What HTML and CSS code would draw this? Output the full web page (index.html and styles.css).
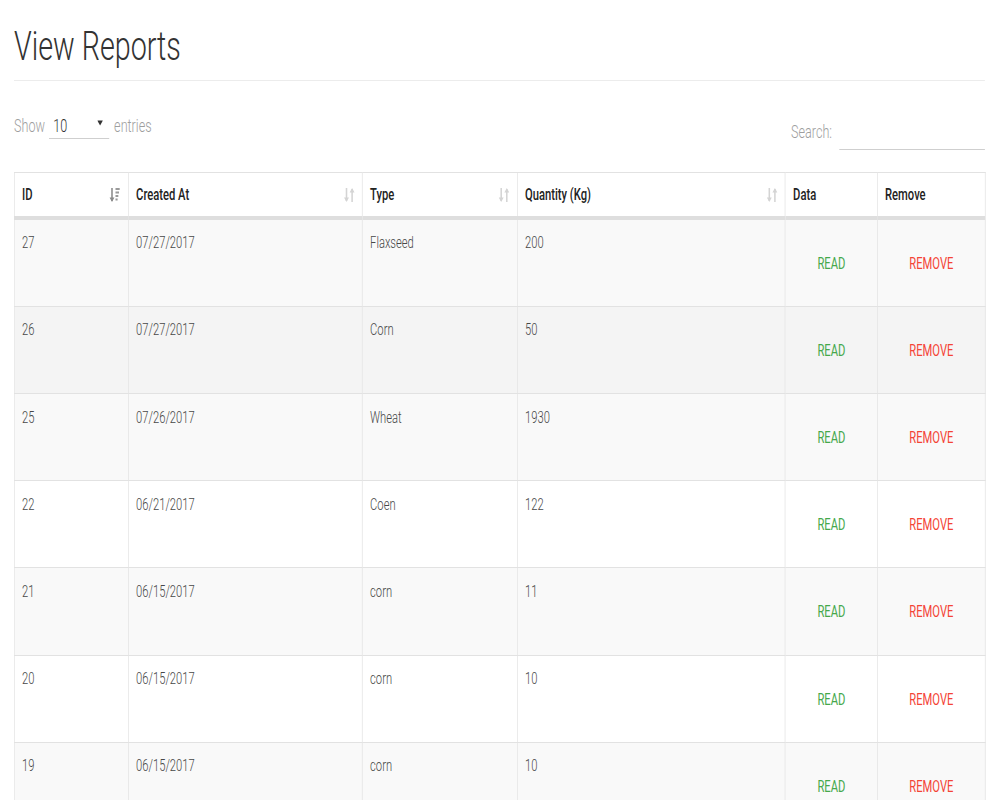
FILE: index.html
```html
<!DOCTYPE html>
<html lang="en">
<head>
<meta charset="utf-8">
<title>View Reports</title>
<link rel="stylesheet" href="styles.css">
</head>
<body>
<div class="page">
  <div class="page-head">
    <h1 class="title">View Reports</h1>
  </div>

  <div class="toolbar">
    <div class="length">
      <span class="muted">Show</span>
      <span class="select">10 <svg class="caret" viewBox="0 0 10 6" width="10" height="6"><path d="M0 0 L10 0 L5 6 Z" fill="#333"/></svg></span>
      <span class="muted">entries</span>
    </div>
    <div class="search">
      <label class="muted search-label" for="q">Search:</label>
      <input id="q" class="search-input" type="search">
    </div>
  </div>

  <table class="grid">
    <thead>
      <tr>
        <th class="c-id"><div class="th-in"><span>ID</span>
          <svg class="sort" viewBox="0 0 16 18" width="16" height="18">
            <path d="M4 2 V15" stroke="#8a8a8a" stroke-width="2.2" fill="none"/>
            <path d="M0.5 11.5 L4 16 L7.5 11.5 Z" fill="#8a8a8a"/>
            <rect x="9" y="2" width="6" height="2" fill="#9a9a9a"/>
            <rect x="9" y="5.5" width="5" height="2" fill="#9a9a9a"/>
            <rect x="9" y="9" width="4" height="2" fill="#9a9a9a"/>
            <rect x="9" y="12.5" width="3" height="2" fill="#9a9a9a"/>
          </svg></div></th>
        <th class="c-date"><div class="th-in"><span>Created At</span>
          <svg class="sort" viewBox="0 0 16 18" width="16" height="18">
            <path d="M4 2 V15" stroke="#d4d4d4" stroke-width="2.2" fill="none"/>
            <path d="M0.5 11.5 L4 16 L7.5 11.5 Z" fill="#d4d4d4"/>
            <path d="M12 16 V3" stroke="#d4d4d4" stroke-width="2.2" fill="none"/>
            <path d="M8.5 6.5 L12 2 L15.5 6.5 Z" fill="#d4d4d4"/>
          </svg></div></th>
        <th class="c-type"><div class="th-in"><span>Type</span>
          <svg class="sort" viewBox="0 0 16 18" width="16" height="18">
            <path d="M4 2 V15" stroke="#d4d4d4" stroke-width="2.2" fill="none"/>
            <path d="M0.5 11.5 L4 16 L7.5 11.5 Z" fill="#d4d4d4"/>
            <path d="M12 16 V3" stroke="#d4d4d4" stroke-width="2.2" fill="none"/>
            <path d="M8.5 6.5 L12 2 L15.5 6.5 Z" fill="#d4d4d4"/>
          </svg></div></th>
        <th class="c-qty"><div class="th-in"><span>Quantity (Kg)</span>
          <svg class="sort" viewBox="0 0 16 18" width="16" height="18">
            <path d="M4 2 V15" stroke="#d4d4d4" stroke-width="2.2" fill="none"/>
            <path d="M0.5 11.5 L4 16 L7.5 11.5 Z" fill="#d4d4d4"/>
            <path d="M12 16 V3" stroke="#d4d4d4" stroke-width="2.2" fill="none"/>
            <path d="M8.5 6.5 L12 2 L15.5 6.5 Z" fill="#d4d4d4"/>
          </svg></div></th>
        <th class="c-data"><div class="th-in"><span>Data</span></div></th>
        <th class="c-rm"><div class="th-in"><span>Remove</span></div></th>
      </tr>
    </thead>
    <tbody>
      <tr class="odd"><td>27</td><td>07/27/2017</td><td>Flaxseed</td><td>200</td><td class="act"><a class="btn read">Read</a></td><td class="act"><a class="btn remove">Remove</a></td></tr>
      <tr class="hover"><td>26</td><td>07/27/2017</td><td>Corn</td><td>50</td><td class="act"><a class="btn read">Read</a></td><td class="act"><a class="btn remove">Remove</a></td></tr>
      <tr class="odd"><td>25</td><td>07/26/2017</td><td>Wheat</td><td>1930</td><td class="act"><a class="btn read">Read</a></td><td class="act"><a class="btn remove">Remove</a></td></tr>
      <tr><td>22</td><td>06/21/2017</td><td>Coen</td><td>122</td><td class="act"><a class="btn read">Read</a></td><td class="act"><a class="btn remove">Remove</a></td></tr>
      <tr class="odd"><td>21</td><td>06/15/2017</td><td>corn</td><td>11</td><td class="act"><a class="btn read">Read</a></td><td class="act"><a class="btn remove">Remove</a></td></tr>
      <tr><td>20</td><td>06/15/2017</td><td>corn</td><td>10</td><td class="act"><a class="btn read">Read</a></td><td class="act"><a class="btn remove">Remove</a></td></tr>
      <tr class="odd"><td>19</td><td>06/15/2017</td><td>corn</td><td>10</td><td class="act"><a class="btn read">Read</a></td><td class="act"><a class="btn remove">Remove</a></td></tr>
    </tbody>
  </table>
</div>
</body>
</html>
```
FILE: styles.css
```css
html, body {
  margin: 0;
  padding: 0;
  background: #fff;
  overflow: hidden;
}

.page {
  width: 1428.6px;
  box-sizing: border-box;
  padding: 0 21.5px 0 20px;
  transform: scaleX(0.7);
  transform-origin: 0 0;
  font-family: Roboto, "Liberation Sans", sans-serif;
  font-weight: 300;
  color: #555;
}

.page-head {
  padding-top: 22px;
  padding-bottom: 8.5px;
  border-bottom: 1px solid #ececec;
}

.title {
  margin: 0;
  font-size: 41px;
  line-height: 1.2;
  font-weight: 300;
  color: #333;
}

.toolbar {
  display: flex;
  justify-content: space-between;
  align-items: flex-start;
  margin-top: 31px;
}

.length {
  font-size: 18px;
  line-height: 27px;
}

.muted {
  color: #9e9e9e;
}

.select {
  display: inline-block;
  width: 86px;
  box-sizing: border-box;
  margin: 0 2.5px 0 1.5px;
  padding: 0 0 2.5px 6px;
  line-height: 21px;
  border-bottom: 1px solid #cfcfcf;
  color: #333;
  position: relative;
}

.caret {
  position: absolute;
  right: 9px;
  top: 5px;
  width: 8px;
  height: 6px;
}

.search {
  display: flex;
  align-items: flex-end;
  margin-top: 6px;
}

.search-label {
  font-size: 18px;
  line-height: 27px;
  margin-bottom: 4.5px;
}

.search-input {
  -webkit-appearance: none;
  appearance: none;
  width: 208.6px;
  height: 32px;
  margin: 0 0 0 10px;
  padding: 0;
  border: 0;
  border-bottom: 1px solid #cfcfcf;
  background: transparent;
  outline: none;
}

.grid {
  margin-top: 22px;
  width: 1387px;
  table-layout: fixed;
  border-collapse: collapse;
  font-size: 16px;
}

.grid th, .grid td {
  box-sizing: border-box;
  border: 1px solid #e2e2e2;
  text-align: left;
  vertical-align: top;
}

.grid th {
  padding: 10px 10.5px 9px 10.5px;
  font-size: 16px;
  line-height: 24px;
  font-weight: 500;
  color: #222;
  border-bottom: 4px solid #dedede;
}

.th-in {
  display: flex;
  justify-content: space-between;
  align-items: center;
}

.sort {
  flex: none;
  margin-right: 0;
}

.c-id { width: 162.9px; }
.c-date { width: 334.3px; }
.c-type { width: 221.4px; }
.c-qty { width: 382.9px; }
.c-data { width: 131.4px; }
.c-rm { width: 154.3px; }

.grid td {
  padding: 11.5px 10.5px 14.5px 10.5px;
  line-height: 24px;
  color: #474747;
}

.grid tr.odd td {
  background: #f9f9f9;
}

.grid tr.hover td {
  background: #f4f4f4;
}

.grid td.act {
  padding-left: 0;
  padding-right: 0;
}

.btn {
  display: block;
  margin: 8.5px 0 3.7px 0;
  line-height: 48px;
  text-align: center;
  text-transform: uppercase;
  font-size: 16px;
  font-weight: 400;
  text-decoration: none;
}

.read { color: #46a84b; }
.remove { color: #f44336; }
```
